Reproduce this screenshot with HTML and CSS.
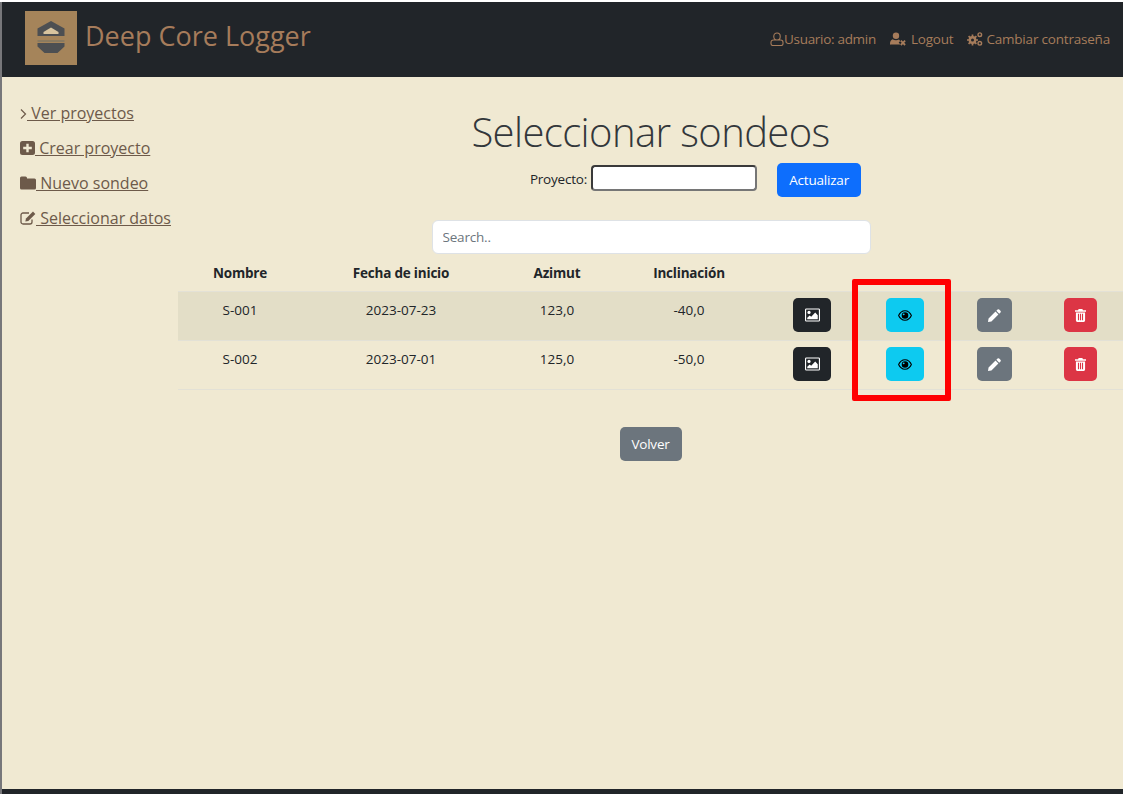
FILE: index.html
```html
<!DOCTYPE html>
<html lang="es">
<head>
    <meta charset="UTF-8">
    <title>Deep Core Logger</title>
    <link rel="stylesheet" href="styles.css">
</head>
<body>
    <svg width="0" height="0" class="defs">
        <symbol id="i-image" viewBox="0 0 16 14">
            <path d="M1.5 0h13A1.5 1.5 0 0 1 16 1.500v11a1.500 1.500 0 0 1-1.500 1.500h-13A1.500 1.500 0 0 1 0 12.500v-11A1.500 1.500 0 0 1 1.500 0zM1.500 1.200a.3.3 0 0 0-.3.3v11a.3.3 0 0 0 .3.3h13a.3.3 0 0 0 .3-.3v-11a.3.3 0 0 0-.3-.3z" fill-rule="evenodd"/>
            <circle cx="4.300" cy="4.200" r="1.700"/>
            <path d="M2.400 11.600V9.800l2.600-2.400 1.600 1.500 4.300-4.600 2.700 2.900v4.400z"/>
        </symbol>
        <symbol id="i-eye" viewBox="0 0 16 12">
            <path fill-rule="evenodd" d="M8 0c3.600 0 6.500 2.300 8 6-1.500 3.700-4.400 6-8 6s-6.500-2.300-8-6c1.500-3.700 4.400-6 8-6zM8 1.200C5.300 1.200 2.900 3 1.400 6c1.500 3 3.900 4.800 6.600 4.800S13.100 9 14.600 6C13.100 3 10.700 1.200 8 1.200z"/>
            <path fill-rule="evenodd" d="M8 2.200a3.800 3.800 0 1 1 0 7.600 3.800 3.800 0 0 1 0-7.600zM6.500 3.600a1.100 1.100 0 1 0 0 2.200 1.100 1.100 0 0 0 0-2.200z"/>
        </symbol>
        <symbol id="i-pencil" viewBox="0 0 14 14">
            <path d="M10.300.6a1.200 1.200 0 0 1 1.700 0l1.400 1.400a1.200 1.200 0 0 1 0 1.700l-1.300 1.300-3.100-3.100zM8.100 2.800l3.100 3.100-7.500 7.500-3.700.6.600-3.700z"/>
        </symbol>
        <symbol id="i-trash" viewBox="0 0 12 14">
            <path d="M4 0h4l.7 1.400H12v1.500H0V1.400h3.300z"/>
            <path fill-rule="evenodd" d="M1 3.700h10v8.800A1.500 1.500 0 0 1 9.500 14h-7A1.500 1.500 0 0 1 1 12.500zM3.200 5.200v7h1.200v-7zM5.400 5.200v7h1.200v-7zM7.600 5.200v7h1.200v-7z"/>
        </symbol>
    </svg>

    <header class="topbar">
        <div class="brand">
            <svg class="logo" viewBox="0 0 52 54">
                <rect width="52" height="54" fill="#a5845a"/>
                <path d="M26 10l13.500 7.500V25h-27v-7.500z" fill="#4d4f52"/>
                <path d="M26 16.500l7.500 4.500v2h-15v-2z" fill="#d8c49f"/>
                <rect x="12.500" y="29" width="27" height="2" fill="#8a7a60"/>
                <path d="M12.500 32h27v3.500L32.500 42h-13l-7-6.500z" fill="#4d4f52"/>
            </svg>
            <span class="brand-name">Deep Core Logger</span>
        </div>
        <nav class="usernav">
            <a href="#" class="usernav-item usernav-user">
                <svg class="nav-icon" viewBox="0 0 14 14"><path d="M7 1a3.200 3.200 0 0 1 3.200 3.200v.6A3.200 3.200 0 0 1 3.800 4.800v-.6A3.200 3.200 0 0 1 7 1zM3.300 8h7.400A2.300 2.300 0 0 1 13 10.300v1.500a1.700 1.700 0 0 1-1.700 1.700H2.700A1.700 1.700 0 0 1 1 11.800v-1.500A2.300 2.300 0 0 1 3.300 8z" fill="none" stroke="currentColor" stroke-width="1.100"/></svg>
                <span>Usuario: admin</span>
            </a>
            <a href="#" class="usernav-item usernav-logout">
                <svg class="nav-icon nav-icon-wide" viewBox="0 0 16 13"><circle cx="6" cy="3.200" r="3.200" fill="currentColor"/><path d="M2.500 6.800c1 .6 2.200 1 3.500 1s2.200-.3 3-.8l1.200 1.400-1.500 1.700 1.700 1.900H.3C0 13 0 12 0 11.200c0-2 .8-3.600 2.500-4.400z" fill="currentColor"/><path d="M10.800 8.200l4.300 4.300M15.100 8.200l-4.300 4.300" stroke="currentColor" stroke-width="1.800" fill="none"/></svg>
                <span>Logout</span>
            </a>
            <a href="#" class="usernav-item">
                <svg class="nav-icon nav-icon-wide" viewBox="0 0 16 14"><path d="M5.500 2.500v11M0 8h11M1.600 4.100l7.800 7.800M9.400 4.100l-7.800 7.800" stroke="currentColor" stroke-width="1.700"/><circle cx="5.500" cy="8" r="3.900" fill="currentColor"/><circle cx="5.500" cy="8" r="1.500" fill="#212529"/><circle cx="12.800" cy="2.700" r="1.800" fill="none" stroke="currentColor" stroke-width="1.400"/><circle cx="12.800" cy="11.300" r="1.800" fill="none" stroke="currentColor" stroke-width="1.400"/></svg>
                <span>Cambiar contraseña</span>
            </a>
        </nav>
    </header>

    <div class="page">
        <aside class="sidebar">
            <a href="#" class="side-link">
                <svg class="side-icon side-icon-chevron" viewBox="0 0 7 12"><path d="M1 1.500L5.500 6 1 10.500" fill="none" stroke="currentColor" stroke-width="1.200"/></svg><u> Ver proyectos</u>
            </a>
            <a href="#" class="side-link">
                <svg class="side-icon" viewBox="0 0 15 14"><path fill-rule="evenodd" d="M2.500 0h10A2.500 2.500 0 0 1 15 2.500v9a2.500 2.500 0 0 1-2.500 2.500h-10A2.500 2.500 0 0 1 0 11.500v-9A2.500 2.500 0 0 1 2.500 0zM6.300 2.800v3H3.200v2.400h3.100v3h2.400v-3h3.100V5.800H8.700v-3z"/></svg><u> Crear proyecto</u>
            </a>
            <a href="#" class="side-link">
                <svg class="side-icon side-icon-folder" viewBox="0 0 16 13"><path d="M1.500 0h4A1.500 1.500 0 0 1 7 1.500V2h7.500A1.500 1.500 0 0 1 16 3.500v8a1.500 1.500 0 0 1-1.500 1.500h-13A1.500 1.500 0 0 1 0 11.500v-10A1.500 1.500 0 0 1 1.500 0z"/></svg><u> Nuevo sondeo</u>
            </a>
            <a href="#" class="side-link">
                <svg class="side-icon side-icon-folder" viewBox="0 0 16 14"><path d="M12 8.500v2.500a2 2 0 0 1-2 2H3a2 2 0 0 1-2-2V4a2 2 0 0 1 2-2h6" fill="none" stroke="currentColor" stroke-width="1.300"/><path d="M13 .6l2.300 2.300-7 7-3 .7.700-3z"/></svg><u> Seleccionar datos</u>
            </a>
        </aside>

        <main class="content">
            <h1 class="title">Seleccionar sondeos</h1>
            <form class="project-form">
                <label class="project-label" for="proyecto">Proyecto:</label>
                <input type="text" id="proyecto" class="project-input">
                <button type="button" class="btn btn-primary">Actualizar</button>
            </form>
            <input type="text" class="search" placeholder="Search..">

            <table class="sondeos">
                <colgroup>
                    <col class="col-nombre"><col class="col-fecha"><col class="col-azimut"><col class="col-incl">
                    <col class="col-a"><col class="col-b"><col class="col-c"><col class="col-d">
                </colgroup>
                <thead>
                    <tr>
                        <th>Nombre</th><th>Fecha de inicio</th><th>Azimut</th><th>Inclinación</th>
                        <th></th><th></th><th></th><th></th>
                    </tr>
                </thead>
                <tbody>
                    <tr class="row-odd">
                        <td>S-001</td><td>2023-07-23</td><td>123,0</td><td>-40,0</td>
                        <td><a href="#" class="btn btn-dark btn-icon"><svg class="i-image"><use href="#i-image"/></svg></a></td>
                        <td><a href="#" class="btn btn-info btn-icon"><svg class="i-eye"><use href="#i-eye"/></svg></a></td>
                        <td><a href="#" class="btn btn-secondary btn-icon btn-edit"><svg class="i-pencil"><use href="#i-pencil"/></svg></a></td>
                        <td><a href="#" class="btn btn-danger btn-icon btn-del"><svg class="i-trash"><use href="#i-trash"/></svg></a></td>
                    </tr>
                    <tr>
                        <td>S-002</td><td>2023-07-01</td><td>125,0</td><td>-50,0</td>
                        <td><a href="#" class="btn btn-dark btn-icon"><svg class="i-image"><use href="#i-image"/></svg></a></td>
                        <td><a href="#" class="btn btn-info btn-icon"><svg class="i-eye"><use href="#i-eye"/></svg></a></td>
                        <td><a href="#" class="btn btn-secondary btn-icon btn-edit"><svg class="i-pencil"><use href="#i-pencil"/></svg></a></td>
                        <td><a href="#" class="btn btn-danger btn-icon btn-del"><svg class="i-trash"><use href="#i-trash"/></svg></a></td>
                    </tr>
                </tbody>
            </table>

            <a href="#" class="btn btn-secondary btn-back">Volver</a>
        </main>
    </div>

    <footer class="footer"></footer>

    <!-- red box drawn over the screenshot -->
    <div class="highlight"></div>
</body>
</html>
```

FILE: styles.css
```css
html, body {
    height: 100%;
}

body {
    margin: 0;
    box-sizing: border-box;
    height: 794px;
    overflow: hidden;
    display: flex;
    flex-direction: column;
    padding: 0 0 0 2px;
    border-top: 2px solid #fff;
    background-color: #f0e9d2;
    box-shadow: inset 2px 0 0 #77777a;
    font-family: "Open Sans", "Noto Sans", sans-serif;
    font-size: 14px;
    color: #212529;
    position: relative;
}

.defs {
    position: absolute;
}

/* Top bar */
.topbar {
    height: 75px;
    flex: none;
    display: flex;
    align-items: center;
    justify-content: space-between;
    background-color: #212529;
    color: #a67c5b;
    padding-left: 23px;
    padding-right: 13px;
}

.brand {
    display: flex;
    align-items: center;
    gap: 8px;
    margin-top: -3px;
}

.logo {
    width: 52px;
    height: 54px;
    display: block;
}

.brand-name {
    font-size: 27px;
    position: relative;
    top: -3px;
}

.usernav {
    display: flex;
    gap: 14px;
    margin-top: -1px;
}

.usernav-item {
    display: flex;
    align-items: center;
    gap: 3px;
    color: #a67c5b;
    text-decoration: none;
    font-size: 13.500px;
    letter-spacing: -0.2px;
}

.usernav-user {
    gap: 0;
    letter-spacing: -0.3px;
}

.usernav-logout {
    gap: 5px;
}

.nav-icon {
    width: 14px;
    height: 14px;
    flex: none;
}

.nav-icon-wide {
    width: 16px;
}

/* Sidebar */
.page {
    flex: 1;
    display: flex;
    min-height: 0;
}

.sidebar {
    width: 176px;
    flex: none;
    box-sizing: border-box;
    padding: 26px 0 0 18px;
    display: flex;
    flex-direction: column;
    gap: 14px;
}

.side-link {
    display: block;
    height: 21px;
    line-height: 21px;
    white-space: nowrap;
    font-size: 16px;
    color: #6d5a4a;
    text-decoration: none;
}

.side-icon {
    width: 15px;
    height: 14px;
    fill: currentColor;
    vertical-align: -1px;
}

.side-icon-chevron {
    width: 7px;
    height: 12px;
    fill: none;
}

.side-icon-folder {
    width: 16px;
}

/* Main column */
.content {
    flex: 1;
    min-width: 0;
    display: flex;
    flex-direction: column;
    align-items: center;
}

.title {
    margin: 25px 0 0;
    font-size: 40px;
    line-height: 60px;
    font-weight: 300;
    letter-spacing: -0.6px;
    color: #33373b;
}

.project-form {
    display: flex;
    align-items: center;
    margin-top: 1px;
    margin-left: 90px;
}

.project-label {
    margin-right: 4px;
    font-size: 13.500px;
    letter-spacing: -0.2px;
    position: relative;
    top: -1px;
}

.project-input {
    box-sizing: border-box;
    width: 166px;
    height: 26px;
    margin-right: 20px;
    border: 2px solid;
    border-color: #3a3a3a #767676 #767676 #3a3a3a;
    border-radius: 4px;
    background: #fff;
    position: relative;
    top: -2px;
}

.search {
    box-sizing: border-box;
    width: 439px;
    height: 34px;
    margin-top: 23px;
    margin-left: 1px;
    padding: 0 10px;
    border: 1px solid #dee2e6;
    border-radius: 6px;
    background: #fff;
    font-family: inherit;
    font-size: 13.500px;
    letter-spacing: -0.2px;
}

.search::placeholder {
    color: #6c757d;
    opacity: 1;
}

/* Table */
.sondeos {
    width: 945px;
    margin-top: 4px;
    table-layout: fixed;
    border-collapse: collapse;
    text-align: center;
    font-size: 13.500px;
}

.col-nombre { width: 124px; }
.col-fecha { width: 198px; }
.col-azimut { width: 114px; }
.col-incl { width: 150px; }
.col-a { width: 96px; }
.col-b { width: 90px; }
.col-c { width: 88px; }
.col-d { width: 85px; }

.sondeos th {
    height: 33px;
    padding: 0;
    font-weight: 700;
    letter-spacing: -0.2px;
    border-bottom: 1px solid #e3e1d6;
    vertical-align: top;
    line-height: 30px;
}

.sondeos td {
    height: 48px;
    padding: 0;
    border-bottom: 1px solid #e3e1d6;
    vertical-align: top;
    line-height: 37px;
}

.row-odd {
    background-color: #e3dec7;
}

/* Buttons */
.btn {
    display: inline-flex;
    align-items: center;
    justify-content: center;
    box-sizing: border-box;
    border: 0;
    border-radius: 5px;
    font-family: inherit;
    font-size: 13.500px;
    letter-spacing: -0.2px;
    color: #fff;
    text-decoration: none;
}

.btn-primary {
    width: 84px;
    height: 34px;
    background-color: #0d6efd;
}

.btn-dark { background-color: #212529; fill: #fff; }
.btn-info { background-color: #0dcaf0; fill: #000; }
.btn-secondary { background-color: #6c757d; fill: #fff; }
.btn-danger { background-color: #dc3545; fill: #fff; }

.btn-icon {
    width: 38px;
    height: 34px;
    margin-top: 6px;
    vertical-align: top;
}

.btn-edit {
    width: 35px;
}

.btn-del {
    width: 33px;
}

.i-image {
    width: 15px;
    height: 14px;
}

.i-eye {
    width: 14px;
    height: 11px;
}

.i-pencil {
    width: 13px;
    height: 13px;
}

.i-trash {
    width: 11px;
    height: 13px;
}

.btn-back {
    width: 62px;
    height: 34px;
    margin-top: 37px;
}

.footer {
    height: 5px;
    flex: none;
    background-color: #212529;
}

.highlight {
    position: absolute;
    left: 852px;
    top: 277px;
    width: 99px;
    height: 122px;
    box-sizing: border-box;
    border: 6px solid #ff0000;
    border-radius: 2px;
}
```
